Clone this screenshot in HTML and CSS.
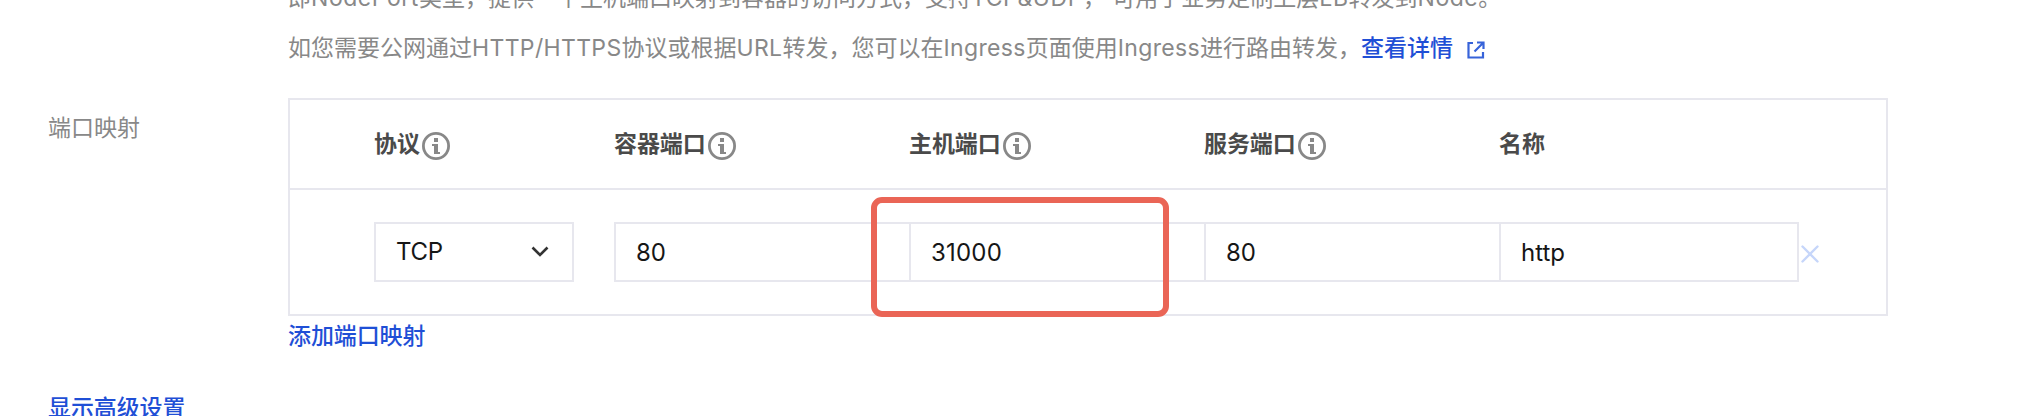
FILE: index.html
```
<!DOCTYPE html>
<html lang="zh-CN">
<head>
<meta charset="utf-8">
<title>端口映射</title>
<link rel="stylesheet" href="styles.css">
</head>
<body>
<main class="page">
  <div class="tips">
    <p class="tip tip-node">即<span class="lat">NodePort</span>类型，提供一个主机端口映射到容器的访问方式，支持<span class="lat">TCP&amp;UDP</span>， 可用于业务定制上层<span class="lat">LB</span>转发到<span class="lat">Node</span>。</p>
    <p class="tip">如您需要公网通过<span class="lat">HTTP/HTTPS</span>协议或根据<span class="lat">URL</span>转发，您可以在<span class="lat">Ingress</span>页面使用<span class="lat">Ingress</span>进行路由转发，<a class="link">查看详情</a><svg class="ext" viewBox="0 0 18 18"><path d="M6 2H1.500v14.500h14.500V11M10 1.500h6.500V8M16 2L7.500 10.500"/></svg></p>
  </div>
  <div class="row">
    <div class="label">端口映射</div>
    <div class="field">
      <div class="table">
        <div class="grid head">
          <div class="th"><span>协议</span><svg class="info" viewBox="0 0 28 28"><circle cx="14" cy="14" r="12.600"/><path d="M12 6h4v4h-4zM10 12h6v8h2v2h-6v-8h-2z"/></svg></div>
          <div class="th"><span>容器端口</span><svg class="info" viewBox="0 0 28 28"><circle cx="14" cy="14" r="12.600"/><path d="M12 6h4v4h-4zM10 12h6v8h2v2h-6v-8h-2z"/></svg></div>
          <div class="th"><span>主机端口</span><svg class="info" viewBox="0 0 28 28"><circle cx="14" cy="14" r="12.600"/><path d="M12 6h4v4h-4zM10 12h6v8h2v2h-6v-8h-2z"/></svg></div>
          <div class="th"><span>服务端口</span><svg class="info" viewBox="0 0 28 28"><circle cx="14" cy="14" r="12.600"/><path d="M12 6h4v4h-4zM10 12h6v8h2v2h-6v-8h-2z"/></svg></div>
          <div class="th"><span>名称</span></div>
        </div>
        <div class="grid body">
          <div class="select"><span>TCP</span><svg class="chev" viewBox="0 0 18 12"><path d="M1.500 1.500L9 9l7.500-7.500"/></svg></div>
          <div class="input">80</div>
          <div class="input host">31000</div>
          <div class="input">80</div>
          <div class="input">http</div>
          <svg class="del" viewBox="0 0 18 18"><path d="M1.500 1.500l15 15M16.500 1.500l-15 15"/></svg>
          <div class="mark"></div>
        </div>
      </div>
      <a class="link add">添加端口映射</a>
    </div>
  </div>
  <a class="link more">显示高级设置</a>
</main>
</body>
</html>
```
FILE: styles.css
```
* { box-sizing: border-box; }
body {
  margin: 0;
  background: #fff;
  font-family: Inter, "Noto Sans CJK SC", sans-serif;
  font-size: 23px;
  color: #888;
}
.page {
  height: 416px;
  overflow: hidden;
  display: flex;
  flex-direction: column;
}
.tips {
  flex: none;
  height: 98px;
  padding-left: 288px;
  display: flex;
  flex-direction: column;
}
.tip {
  margin: 0;
  height: 48px;
  line-height: 48px;
  white-space: nowrap;
}
.tip-node { margin: -26px 0 2px; }
.lat { letter-spacing: 0.35px; }
.tip-node .lat { letter-spacing: 0.55px; }
.link { color: #1f4fd6; font-weight: 500; }
.ext {
  width: 18px;
  height: 18px;
  margin-left: 14px;
  vertical-align: -3px;
  fill: none;
  stroke: #3763d9;
  stroke-width: 2.2;
}
.row { flex: none; display: flex; }
.label {
  width: 288px;
  padding-left: 48px;
  line-height: 60px;
}
.field { display: flex; flex-direction: column; }
.table {
  width: 1600px;
  height: 218px;
  border: 2px solid #e7e7ee;
}
.grid {
  display: grid;
  grid-template-columns: 240px 295px 295px 295px 302px 18px;
  padding-left: 84px;
}
.head {
  height: 90px;
  border-bottom: 2px solid #e7e7ee;
}
.th {
  display: flex;
  align-items: center;
  font-weight: 700;
  color: #4a4a4a;
  height: 88px;
}
.th span { padding-bottom: 4px; letter-spacing: -0.1px; }
.info { width: 28px; height: 28px; margin: 4px 0 0 2px; }
.info circle { fill: none; stroke: #888; stroke-width: 2.8; }
.info path { fill: #888; }
.body {
  position: relative;
  height: 124px;
  align-items: center;
}
.select, .input {
  height: 60px;
  border: 2px solid #e7e7ee;
  background: #fff;
  padding: 0 20px;
  color: #161616;
  font-size: 24px;
  display: flex;
  align-items: center;
}
.select { width: 200px; justify-content: space-between; padding-right: 23px; }
.select span { letter-spacing: -0.3px; padding-bottom: 1px; }
.input { width: 300px; padding-top: 1px; }
.host { letter-spacing: 0.2px; }
.chev {
  width: 18px;
  height: 12px;
  fill: none;
  stroke: #333;
  stroke-width: 2.6;
}
.del {
  width: 18px;
  height: 18px;
  margin-top: 4px;
  fill: none;
  stroke: #c6d6fa;
  stroke-width: 2.4;
  stroke-linecap: round;
}
/* highlight frame drawn over the host port cell */
.mark {
  position: absolute;
  left: 581px;
  top: 7px;
  width: 298px;
  height: 120px;
  border: 6px solid #ea6556;
  border-radius: 11px;
}
.add { line-height: 40px; letter-spacing: -0.1px; }
.more { flex: none; padding-left: 48px; margin-top: 32px; line-height: 40px; letter-spacing: -0.1px; }
```
